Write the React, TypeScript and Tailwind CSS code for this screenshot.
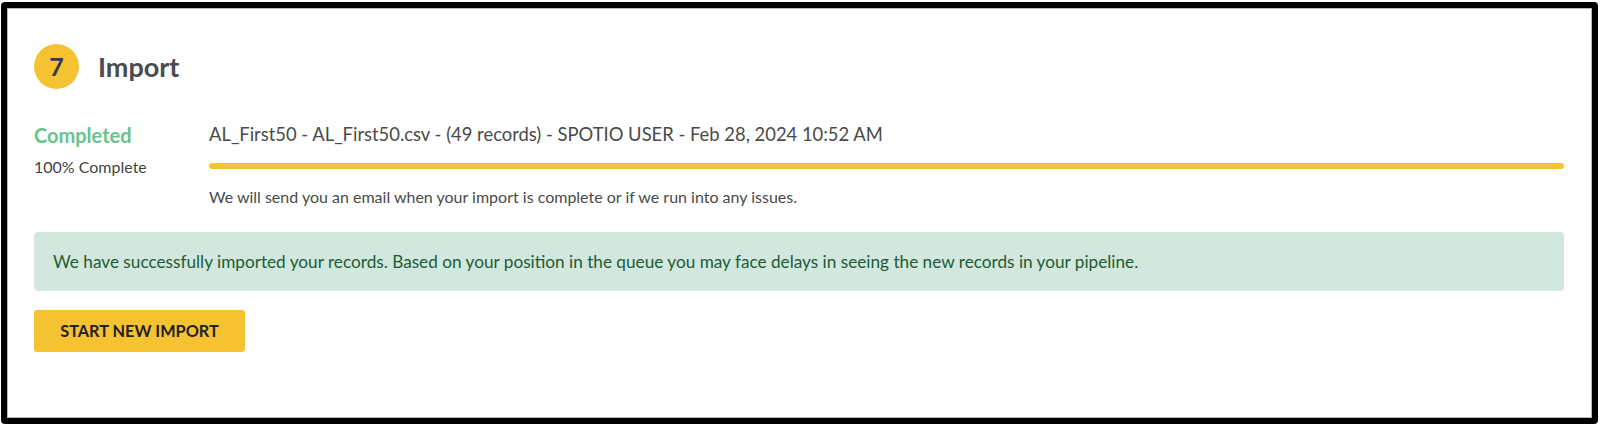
import React from 'react';

const font = { fontFamily: 'Lato, "Open Sans", Arial, sans-serif' };

export default function App() {
    return (
        <div className="w-[1604px] h-[428px] bg-white pt-[2px] pl-[1px]" style={font}>
            <div className="w-[1597px] h-[422px] border-[6px] border-black rounded-[4px]">
                <div className="h-full border border-[#b8b8b8] bg-white pl-[26px] pr-[27px] pt-[35px]">
                    <div className="flex items-center gap-[19px]">
                        <div className="w-[45px] h-[45px] rounded-full bg-[#f5c332] flex items-center justify-center text-[25px] font-bold text-[#3b3b42]">
                            7
                        </div>
                        <h2 className="text-[27px] font-bold text-[#4b4b53] leading-none">Import</h2>
                    </div>

                    <div className="flex mt-[31px]">
                        <div className="w-[175px] shrink-0 pt-[3px]">
                            <div className="text-[20px] leading-[24px] font-bold text-[#6cc28c]">Completed</div>
                            <div className="text-[16px] leading-[20px] text-[#444] mt-[10px]">100% Complete</div>
                        </div>
                        <div className="flex-1 min-w-0">
                            <p className="pt-[2px] text-[18.4px] leading-[24px] text-[#4a4a4a]">
                                AL_First50 - AL_First50.csv - (49 records) - SPOTIO USER - Feb 28, 2024 10:52 AM
                            </p>
                            <div className="mt-[17px] h-[6px] rounded-full bg-[#f5c332]" />
                            <p className="mt-[18px] text-[16px] leading-[20px] text-[#4a4a4a]">
                                We will send you an email when your import is complete or if we run into any issues.
                            </p>
                        </div>
                    </div>

                    <div className="mt-[25px] h-[59px] rounded-[4px] bg-[#d2e7dd] flex items-center pl-[19px] text-[17.2px] text-[#1d5c35]">
                        We have successfully imported your records. Based on your position in the queue you may face delays in seeing the new records in your pipeline.
                    </div>

                    <button className="mt-[19px] h-[42px] w-[211px] rounded-[3px] bg-[#f5c332] text-[16.3px] font-bold text-[#222] uppercase">
                        Start New Import
                    </button>
                </div>
            </div>
        </div>
    );
}
